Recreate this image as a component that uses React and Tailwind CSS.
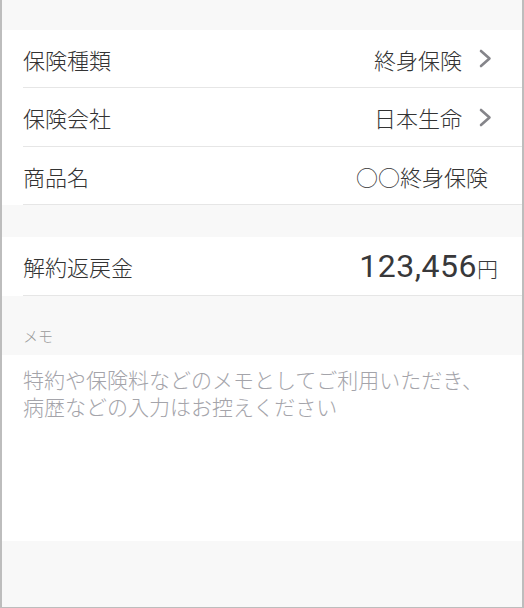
import React from 'react';

const jp = { fontFamily: '"Noto Sans CJK JP", "Noto Sans", sans-serif' };

function Chevron() {
  return (
    <svg width="13" height="19" viewBox="0 0 13 19" className="shrink-0">
      <path d="M2 2 L10.5 9.5 L2 17" fill="none" stroke="#85858a" strokeWidth="2.6" strokeLinecap="round" strokeLinejoin="round" />
    </svg>
  );
}

function Row({ label, value, chevron, pr, h }) {
  return (
    <div className="bg-white pl-[21px]">
      <div className={`flex items-center justify-between border-b border-[#e6e6e6] ${h} ${pr}`}>
        <span className="text-[22px] font-light text-[#333333] leading-none">{label}</span>
        <div className="flex items-center gap-[17px]">
          <span className="text-[22px] font-light text-[#333333] leading-none">{value}</span>
          {chevron && <Chevron />}
        </div>
      </div>
    </div>
  );
}

export default function App() {
  return (
    <div
      className="flex h-[608px] w-full flex-col border-x-2 border-b border-[#bdbdbd] bg-[#f8f8f8]"
      style={jp}
    >
      <div className="h-[30px]" />
      <Row label="保険種類" value="終身保険" chevron pr="pr-[30px]" h="h-[58px]" />
      <Row label="保険会社" value="日本生命" chevron pr="pr-[30px]" h="h-[59px]" />
      <Row label="商品名" value="○○終身保険" pr="pr-[34px]" h="h-[58px]" />

      <div className="h-[32px]" />

      <div className="bg-white pl-[21px]">
        <div className="flex h-[59px] items-center justify-between border-b border-[#e6e6e6] pr-[24px]">
          <span className="text-[22px] font-light text-[#333333] leading-none">解約返戻金</span>
          <div className="flex items-baseline">
            <span
              className="text-[32px] font-normal leading-none tracking-[0.5px] text-[#38383a]"
              style={{ fontFamily: 'Roboto, "Noto Sans", sans-serif' }}
            >
              123,456
            </span>
            <span className="text-[21px] font-light leading-none text-[#38383a]">円</span>
          </div>
        </div>
      </div>

      <div className="flex h-[59px] items-end pb-[9px] pl-[21px]">
        <span className="text-[15px] font-light leading-[20px] text-[#9a9a9a]">メモ</span>
      </div>

      <div className="h-[186px] bg-white pl-[21px] pr-[20px] pt-[11px]">
        <p className="text-[21px] font-light leading-[27px] text-[#a4a4aa]">
          特約や保険料などのメモとしてご利用いただき、
          <br />
          病歴などの入力はお控えください
        </p>
      </div>
    </div>
  );
}
